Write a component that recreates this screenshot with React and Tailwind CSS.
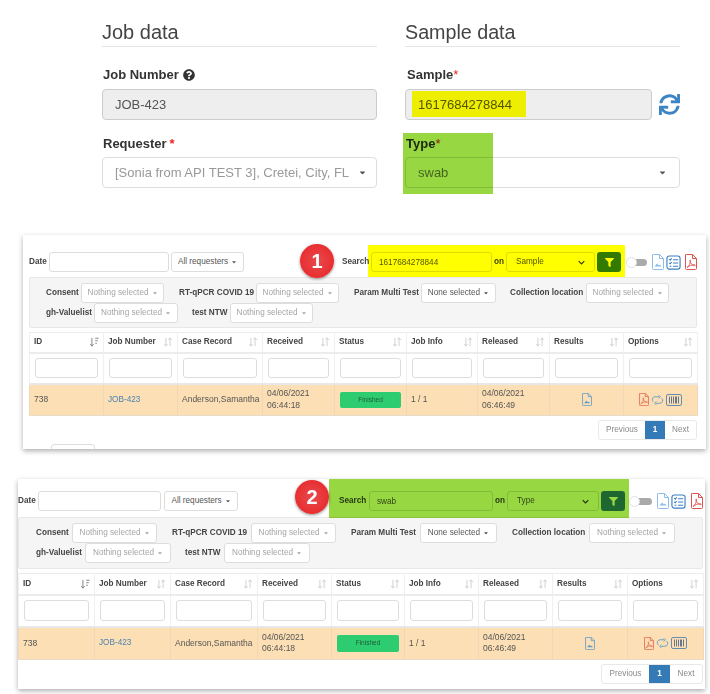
import { FaQuestionCircle, FaSync, FaFilter, FaCaretDown } from 'react-icons/fa'

function SortIcon({ active }) {
  return (
    <svg viewBox="0 0 12 12" className="w-[10px] h-[10px]" fill="none" stroke={active ? '#888' : '#d2d2d2'} strokeWidth="1.2">
      <path d="M3.500 1v10M1.500 8.500l2 2.500 2-2.500" />
      {active ? <path d="M7.500 1.500h4M7.500 4.500h3M7.500 7.500h2" /> : <path d="M8.500 11V1M6.500 3.500l2-2.500 2 2.500" />}
    </svg>
  )
}

function FileImageIcon({ className }) {
  return (
    <svg viewBox="0 0 12 16" className={className} fill="none" stroke="currentColor" strokeWidth="1">
      <path d="M1.500 .5h6l4 4v10a1 1 0 0 1-1 1h-9a1 1 0 0 1-1-1v-13.500a.5 .5 0 0 1 1-.5z" />
      <path d="M7.500 .5v4h4" />
      <path d="M2.500 12.500l2.500-3 2 2 1-1 1.500 2z" fill="currentColor" stroke="none" />
    </svg>
  )
}

function FilePdfIcon({ className }) {
  return (
    <svg viewBox="0 0 12 16" className={className} fill="none" stroke="currentColor" strokeWidth="1">
      <path d="M1.500 .5h6l4 4v10a1 1 0 0 1-1 1h-9a1 1 0 0 1-1-1v-13.500a.5 .5 0 0 1 1-.5z" />
      <path d="M7.500 .5v4h4" />
      <path d="M2 13.500c2-1 3.500-4.500 3.500-7 0-1-.8-.8-.6.400.400 2.300 2.400 4.600 4.600 4.800 1.200.100 1-1-.3-1-2 0-4.700.800-7.200 2.800z" strokeWidth=".9" />
    </svg>
  )
}

function ChecklistIcon({ className }) {
  return (
    <svg viewBox="0 0 16 16" className={className} fill="none" stroke="currentColor" strokeWidth="1.200">
      <rect x="1" y="1" width="14" height="14" rx="2.500" />
      <path d="M3.500 4.500l1 1 1.500-1.800M3.500 8.300l1 1 1.500-1.800M7.500 5h5.500M7.500 8.500h5.500M7.500 12h5.500M3.800 12h2" />
    </svg>
  )
}

function LoopIcon() {
  return (
    <svg viewBox="0 0 16 14" className="w-[13px] h-[12px]" fill="none" stroke="#5b9bc9" strokeWidth="1.100">
      <path d="M10 3H5a3.500 3.500 0 0 0-2 6.300M6 11h5a3.500 3.500 0 0 0 2-6.300" />
      <path d="M9.500 1l2 2-2 2M6.500 9l-2 2 2 2" />
    </svg>
  )
}

function BarcodeIcon() {
  return (
    <svg viewBox="0 0 16 12" className="w-[16px] h-[12px]" fill="none" stroke="#6a8bb0">
      <rect x="0.500" y="0.500" width="15" height="11" rx="1.500" />
      <path d="M3.500 2.500v7M5.500 2.500v7M7.500 2.500v7M9.500 2.500v7M10.500 2.500v7M12.500 2.500v7" stroke="#68788c" />
    </svg>
  )
}

function Dropdown({ text, muted, className }) {
  return (
    <div className={`h-[20px] shrink-0 flex items-center justify-center gap-[3px] bg-white border border-[#ddd] rounded-[3px] text-[8.200px] ${muted ? 'text-[#a5a5a5]' : 'text-[#555]'} ${className}`}>
      {text}
      <FaCaretDown className="w-[6px] h-[6px]" />
    </div>
  )
}

function FieldLabel({ text, className }) {
  return <span className={`shrink-0 whitespace-nowrap font-bold text-[8.200px] text-[#444] ${className}`}>{text}</span>
}

function FilterRow({ items }) {
  return (
    <div className="flex items-center h-[20px]">
      {items.map((item) => (
        <div key={item.label} className="flex items-center">
          <FieldLabel text={item.label} className={item.labelClass} />
          <Dropdown text={item.value || 'Nothing selected'} muted={!item.value} className={item.selectClass} />
        </div>
      ))}
    </div>
  )
}

const headers = ['ID', 'Job Number', 'Case Record', 'Received', 'Status', 'Job Info', 'Released', 'Results', 'Options']

function DataTable({ cols, headClass, searchClass, rowClass, inputClass, badgeClass }) {
  return (
    <table className={`table-fixed border-collapse text-[8.500px] text-[#555] ${cols.width}`}>
      <colgroup>
        {cols.items.map((c, i) => (
          <col key={i} className={c} />
        ))}
      </colgroup>
      <thead>
        <tr className={`${headClass} border-t border-b-2 border-[#ececec]`}>
          {headers.map((h, i) => (
            <th key={h} className="border-x border-[#f0f0f0] px-[4px] text-left text-[8.200px] font-bold text-[#444]">
              <div className="flex items-center justify-between">
                {h}
                <SortIcon active={i === 0} />
              </div>
            </th>
          ))}
        </tr>
        <tr className={`${searchClass} border-b-2 border-[#e8e8e8]`}>
          {headers.map((h) => (
            <th key={h} className="border-x border-[#f0f0f0] px-[5px] font-normal">
              <input readOnly aria-label={h} className={`block w-full bg-white border border-[#ddd] rounded-[3px] ${inputClass}`} />
            </th>
          ))}
        </tr>
      </thead>
      <tbody>
        <tr className={`${rowClass} bg-[#fcdfb4] border-b border-[#e8dcc8]`}>
          <td className="border-x border-[#eed8b8] px-[4px]">738</td>
          <td className="border-x border-[#eed8b8] px-[4px] text-[8.200px] text-[#4a83b5]">JOB-423</td>
          <td className="border-x border-[#eed8b8] px-[4px] whitespace-nowrap">Anderson,Samantha</td>
          <td className="border-x border-[#eed8b8] px-[4px] leading-[11.500px]">04/06/2021<br />06:44:18</td>
          <td className="border-x border-[#eed8b8] px-[5px]">
            <div className={`flex items-center justify-center bg-[#2ecc71] rounded-[2px] text-[6.500px] text-[#1d5c36] ${badgeClass}`}>Finished</div>
          </td>
          <td className="border-x border-[#eed8b8] px-[4px]">1 / 1</td>
          <td className="border-x border-[#eed8b8] px-[4px] leading-[11.500px]">04/06/2021<br />06:46:49</td>
          <td className="border-x border-[#eed8b8] px-[4px]">
            <FileImageIcon className="w-[10px] h-[13px] mx-auto text-[#5b9bc9]" />
          </td>
          <td className="border-x border-[#eed8b8] px-[4px]">
            <div className="flex items-center justify-center gap-[2px]">
              <FilePdfIcon className="w-[10px] h-[13px] text-[#e2674f]" />
              <LoopIcon />
              <BarcodeIcon />
            </div>
          </td>
        </tr>
      </tbody>
    </table>
  )
}

function Panel({ cfg, children }) {
  return (
    <div className={`relative bg-white overflow-hidden shadow-[0_2px_5px_rgba(0,0,0,0.32)] ${cfg.panel}`}>
      <div className="blur-[0.3px]">
        {/* Toolbar */}
        <div className="flex items-center h-[20px] text-[8.200px] text-[#555]">
          <FieldLabel text="Date" className={cfg.dateLabel} />
          <input readOnly aria-label="Date" className={`h-[20px] bg-white border border-[#ddd] rounded-[3px] ${cfg.dateInput}`} />
          <Dropdown text="All requesters" className={cfg.requesters} />
          <FieldLabel text="Search" className={cfg.searchLabel} />
          <input readOnly value={cfg.search} className={`h-[20px] px-[7px] bg-white border border-[#ddd] rounded-[3px] text-[8.200px] text-[#555] ${cfg.searchInput}`} />
          <FieldLabel text="on" className={cfg.onLabel} />
          <div className={`h-[20px] flex items-center justify-between px-[9px] bg-white border border-[#ddd] rounded-[3px] text-[8.200px] ${cfg.select}`}>
            {cfg.on}
            <svg viewBox="0 0 10 6" className="w-[7px] h-[5px]" fill="none" stroke="#333" strokeWidth="1.500">
              <path d="M1 1l4 4 4-4" />
            </svg>
          </div>
          <div className={`h-[20px] w-[24px] flex items-center justify-center bg-[#337ab7] rounded-[3px] ${cfg.filterBtn}`}>
            <FaFilter className="w-[9px] h-[9px] text-white" />
          </div>
          <div className={`relative h-[11px] flex items-center ${cfg.toggle}`}>
            <div className="ml-[6px] flex-1 h-[7px] rounded-full bg-[#aaa]" />
            <div className="absolute left-0 top-0 w-[11px] h-[11px] rounded-full bg-white border border-[#e0e0e0]" />
          </div>
          <FileImageIcon className={`w-[12px] h-[16px] text-[#8cbcec] ${cfg.icon1}`} />
          <ChecklistIcon className={`w-[15px] h-[15px] text-[#3a7fc4] ${cfg.icon2}`} />
          <FilePdfIcon className={`w-[12px] h-[16px] text-[#e0524d] ${cfg.icon3}`} />
        </div>

        {/* Extra filters */}
        <div className={`bg-[#f5f5f5] border border-[#e8e8e8] rounded-[2px] pt-[5px] ${cfg.box}`}>
          <FilterRow items={cfg.row1} />
          <FilterRow items={cfg.row2} />
        </div>

        <div className="mt-[4px]">
          <DataTable cols={cfg.cols} headClass={cfg.head} searchClass={cfg.searchRow} rowClass={cfg.dataRow} inputClass={cfg.cellInput} badgeClass={cfg.badge} />
        </div>

        {/* Pagination */}
        <div className={`mt-[4px] flex justify-end ${cfg.pager}`}>
          <div className="flex h-[20px] text-[8.200px] text-[#8a8a8a] border border-[#e8e8e8] rounded-[3px] overflow-hidden">
            <span className={`flex items-center justify-center ${cfg.prev}`}>Previous</span>
            <span className={`flex items-center justify-center bg-[#337ab7] text-white font-bold ${cfg.page}`}>1</span>
            <span className={`flex items-center justify-center ${cfg.next}`}>Next</span>
          </div>
        </div>
        {cfg.clipped && <div className="mt-[4px] ml-[22px] w-[44px] h-[20px] border border-[#ddd] rounded-[3px]" />}
      </div>

      {/* Callout number */}
      <div className={`absolute w-[34px] h-[34px] rounded-full bg-radial from-[#e8484c] to-[#e81c22] shadow-[0_1px_3px_rgba(0,0,0,0.45)] flex items-center justify-center text-white font-bold text-[20px] ${cfg.callout}`}>
        {cfg.number}
      </div>
      {children}
    </div>
  )
}

const first = {
  number: '1',
  search: '1617684278844',
  on: 'Sample',
  panel: 'ml-[23px] w-[683px] h-[214px] pt-[17px] pl-[6px]',
  dateLabel: 'w-[20px]',
  dateInput: 'w-[120px]',
  requesters: 'ml-[2px] w-[73px]',
  searchLabel: 'ml-[98px] w-[29px]',
  searchInput: 'w-[121px]',
  onLabel: 'ml-[2px] w-[12px]',
  select: 'w-[89px]',
  filterBtn: 'ml-[2px]',
  toggle: 'ml-[5px] w-[21px]',
  icon1: 'ml-[5px]',
  icon2: 'ml-[2px]',
  icon3: 'ml-[4px]',
  box: 'mt-[5px] h-[51px] w-[668px] pl-[16px]',
  row1: [
    { label: 'Consent', labelClass: 'w-[35px]', selectClass: 'w-[83px]' },
    { label: 'RT-qPCR COVID 19', labelClass: 'ml-[15px] w-[77px]', selectClass: 'w-[83px]' },
    { label: 'Param Multi Test', labelClass: 'ml-[15px] w-[67px]', selectClass: 'w-[75px]', value: 'None selected' },
    { label: 'Collection location', labelClass: 'ml-[14px] w-[76px]', selectClass: 'w-[83px]' },
  ],
  row2: [
    { label: 'gh-Valuelist', labelClass: 'w-[48px]', selectClass: 'w-[84px]' },
    { label: 'test NTW', labelClass: 'ml-[14px] w-[38px]', selectClass: 'w-[83px]' },
  ],
  cols: {
    width: 'w-[668px]',
    items: ['w-[74px]', 'w-[74px]', 'w-[85px]', 'w-[72px]', 'w-[72px]', 'w-[71px]', 'w-[72px]', 'w-[74px]', 'w-[74px]'],
  },
  head: 'h-[20px]',
  searchRow: 'h-[31px]',
  dataRow: 'h-[32px]',
  cellInput: 'h-[20px]',
  badge: 'h-[16px]',
  pager: 'w-[668px]',
  prev: 'w-[46px]',
  page: 'w-[20px]',
  next: 'w-[31px]',
  clipped: true,
  callout: 'left-[277px] top-[9px]',
}

const second = {
  number: '2',
  search: 'swab',
  on: 'Type',
  panel: 'ml-[18px] mt-[30px] w-[687px] h-[210px] pt-[12px]',
  dateLabel: 'w-[20px]',
  dateInput: 'w-[123px]',
  requesters: 'ml-[3px] w-[74px]',
  searchLabel: 'ml-[101px] w-[30px]',
  searchInput: 'w-[124px]',
  onLabel: 'ml-[2px] w-[12px]',
  select: 'w-[92px]',
  filterBtn: 'ml-[2px]',
  toggle: 'ml-[4px] w-[23px]',
  icon1: 'ml-[5px]',
  icon2: 'ml-[2px]',
  icon3: 'ml-[5px]',
  box: 'mt-[6px] h-[52px] w-[685px] pl-[17px]',
  row1: [
    { label: 'Consent', labelClass: 'w-[36px]', selectClass: 'w-[85px]' },
    { label: 'RT-qPCR COVID 19', labelClass: 'ml-[15px] w-[79px]', selectClass: 'w-[85px]' },
    { label: 'Param Multi Test', labelClass: 'ml-[15px] w-[69px]', selectClass: 'w-[77px]', value: 'None selected' },
    { label: 'Collection location', labelClass: 'ml-[15px] w-[77px]', selectClass: 'w-[86px]' },
  ],
  row2: [
    { label: 'gh-Valuelist', labelClass: 'w-[49px]', selectClass: 'w-[86px]' },
    { label: 'test NTW', labelClass: 'ml-[14px] w-[39px]', selectClass: 'w-[86px]' },
  ],
  cols: {
    width: 'w-[685px]',
    items: ['w-[76px]', 'w-[76px]', 'w-[87px]', 'w-[74px]', 'w-[73px]', 'w-[74px]', 'w-[74px]', 'w-[75px]', 'w-[76px]'],
  },
  head: 'h-[21px]',
  searchRow: 'h-[32px]',
  dataRow: 'h-[33px]',
  cellInput: 'h-[21px]',
  badge: 'h-[17px]',
  pager: 'w-[685px]',
  prev: 'w-[47px]',
  page: 'w-[21px]',
  next: 'w-[32px]',
  callout: 'left-[277px] top-[1px]',
}

export default function App() {
  return (
    <div className="relative w-[710px] h-[694px] overflow-hidden bg-white font-['Liberation_Sans',Arial,sans-serif]">
      {/* Job and sample form */}
      <div className="ml-[102px] pt-[17px] grid grid-cols-[275px_275px] gap-x-[28px] text-[#333]">
        <div>
          <h2 className="h-[30px] border-b border-[#e5e5e5] text-[20px] leading-[30px] text-[#444]">Job data</h2>
          <label className="mt-[18px] ml-[1px] h-[20px] flex items-center gap-[4px] text-[13px] font-bold">
            Job Number <FaQuestionCircle className="w-[12px] h-[12px]" />
          </label>
          <input readOnly value="JOB-423" className="mt-[4px] block w-full h-[31px] px-[12px] bg-[#eee] border border-[#ccc] rounded-[4px] text-[13px] text-[#555]" />
          <label className="mt-[14px] ml-[1px] h-[20px] flex items-center gap-[3px] text-[13px] font-bold">
            Requester <span className="text-[#e22]">*</span>
          </label>
          <div className="mt-[3px] h-[31px] pl-[12px] pr-[9px] flex items-center justify-between bg-white border border-[#ddd] rounded-[4px] text-[13px] text-[#999]">
            [Sonia from API TEST 3], Cretei, City, FL
            <FaCaretDown className="w-[9px] h-[9px] text-[#555]" />
          </div>
        </div>
        <div>
          <h2 className="h-[30px] border-b border-[#e5e5e5] text-[19.700px] leading-[30px] text-[#444]">Sample data</h2>
          <label className="mt-[18px] ml-[2px] h-[20px] flex items-center text-[13px] font-bold">
            Sample<span className="text-[#e22] font-normal">*</span>
          </label>
          <div className="mt-[4px] flex items-center">
            <input readOnly value="1617684278844" className="block w-[247px] h-[31px] px-[12px] bg-[#eee] border border-[#ccc] rounded-[4px] text-[13px] text-[#555]" />
            <FaSync className="ml-[7px] w-[21px] h-[21px] text-[#3d84c4]" />
          </div>
          <label className="mt-[14px] ml-[1px] h-[20px] flex items-center text-[13px] font-bold">
            Type<span className="text-[#e22] font-normal">*</span>
          </label>
          <div className="mt-[3px] h-[31px] pl-[12px] pr-[12px] flex items-center justify-between bg-white border border-[#ddd] rounded-[4px] text-[13px] text-[#777]">
            swab
            <FaCaretDown className="w-[9px] h-[9px] text-[#555]" />
          </div>
        </div>
      </div>

      {/* Highlights over the form */}
      <div className="absolute left-[412px] top-[91px] w-[114px] h-[26px] bg-[#ffff00] mix-blend-multiply" />
      <div className="absolute left-[403px] top-[133px] w-[90px] h-[61px] bg-[#96d742] mix-blend-multiply" />

      <div className="mt-[47px]">
        <Panel cfg={first}>
          <div className="absolute left-[345px] top-[10px] w-[257px] h-[32px] bg-[#ffff00] mix-blend-multiply" />
        </Panel>
      </div>
      <Panel cfg={second}>
        <div className="absolute left-[311px] top-0 w-[300px] h-[39px] bg-[#96d742] mix-blend-multiply" />
      </Panel>
    </div>
  )
}
